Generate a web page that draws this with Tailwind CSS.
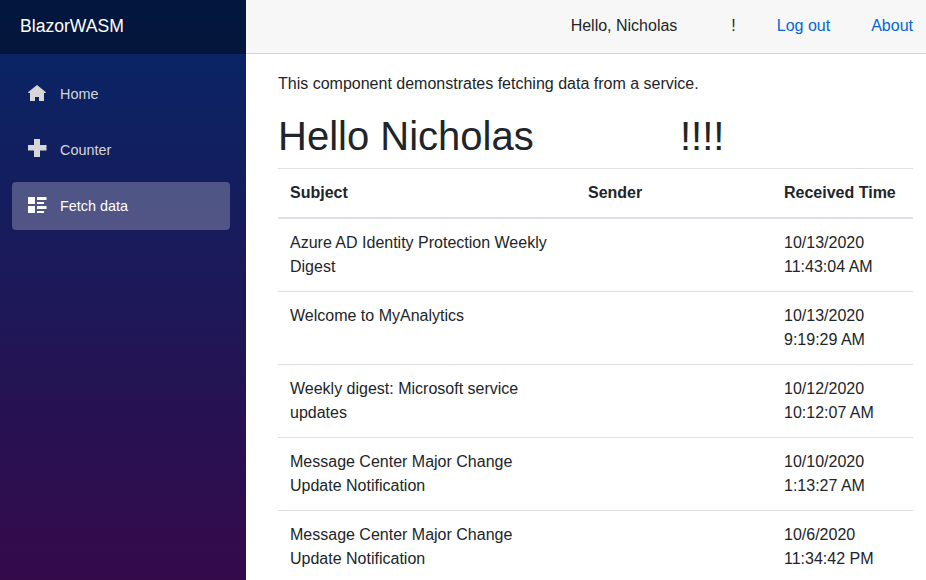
<!DOCTYPE html>
<html lang="en">
<head>
<meta charset="utf-8">
<title>BlazorWASM</title>
<script src="https://cdn.jsdelivr.net/npm/@tailwindcss/browser@4"></script>
</head>
<body class="flex h-[580px] overflow-hidden bg-white font-['Liberation_Sans',Arial,sans-serif] text-base text-[#212529]">
<aside class="h-full w-[246px] shrink-0 bg-[linear-gradient(180deg,rgb(5,39,103)_0px,#3a0647_650px)]">
  <div class="flex h-[54px] items-center bg-black/40 pl-5 pb-px text-[17.6px] text-white">BlazorWASM</div>
  <nav class="flex flex-col gap-2 pl-3 pr-4 pt-4 text-[14.4px] text-[#d7d7d7]">
    <a class="flex h-12 items-center rounded pl-4">
      <svg class="mr-3 h-5 w-5 shrink-0" viewBox="0 0 20 20" fill="currentColor"><path d="M9 1 .3 8v1H2v8h5v-4h4v4h5V9h1.700V8z"/></svg><span class="pt-0.5">Home</span>
    </a>
    <a class="flex h-12 items-center rounded pl-4">
      <svg class="mr-3 h-5 w-5 shrink-0 -translate-y-px" viewBox="0 0 20 20" fill="currentColor"><path d="M6 0h6v6h6.500v5.500H12V18H6v-6.500H0V6h6z"/></svg><span class="pt-0.5">Counter</span>
    </a>
    <a class="flex h-12 items-center rounded bg-white/25 pl-4 text-white">
      <svg class="mr-3 h-5 w-5 shrink-0 -translate-y-px" viewBox="0 0 20 20" fill="currentColor"><path d="M0 2h7v7H0zM0 11h7v7H0zM9 2h9.500v3H9zM9 7h7v2H9zM9 11h9.500v3H9zM9 16h7v2H9z"/></svg><span class="pt-0.5">Fetch data</span>
    </a>
  </nav>
</aside>
<main class="min-w-0 flex-1">
  <header class="flex h-[54px] items-center justify-end border-b border-[#d6d5d5] bg-[#f7f7f7] pr-[13px] pb-0.5">
    <span class="mr-[54px]">Hello, Nicholas</span>
    <span class="mr-[41px]">!</span>
    <a class="mr-[41px] text-[#0366d6]">Log out</a>
    <a class="text-[#0366d6]">About</a>
  </header>
  <section class="pt-[18px] pl-8 pr-[13px]">
    <p class="leading-6">This component demonstrates fetching data from a service.</p>
    <h1 class="mt-4 mb-2 flex h-[46px] items-center pt-0.5 text-[40px] leading-[46px]"><span class="w-[402px]">Hello Nicholas</span><span>!!!!</span></h1>
    <table class="mt-[10px] w-[635px] table-fixed border-separate border-spacing-0 text-left leading-6">
      <colgroup><col class="w-[297px]"><col class="w-[197px]"><col class="w-[141px]"></colgroup>
      <thead>
        <tr class="h-[51px] [&>th]:border-t [&>th]:border-b-2 [&>th]:border-[#dee2e6] [&>th]:px-3 [&>th]:font-bold">
          <th>Subject</th><th class="indent-px">Sender</th><th class="whitespace-nowrap">Received Time</th>
        </tr>
      </thead>
      <tbody class="[&_td]:h-[73px] [&_td]:border-b [&_td]:border-[#dee2e6] [&_td]:px-3 [&_td]:align-middle">
        <tr><td>Azure AD Identity Protection Weekly Digest</td><td></td><td>10/13/2020<br>11:43:04 AM</td></tr>
        <tr><td class="pb-6">Welcome to MyAnalytics</td><td></td><td>10/13/2020<br>9:19:29 AM</td></tr>
        <tr><td>Weekly digest: Microsoft service updates</td><td></td><td>10/12/2020<br>10:12:07 AM</td></tr>
        <tr><td>Message Center Major Change Update Notification</td><td></td><td>10/10/2020<br>1:13:27 AM</td></tr>
        <tr><td>Message Center Major Change Update Notification</td><td></td><td>10/6/2020<br>11:34:42 PM</td></tr>
      </tbody>
    </table>
  </section>
</main>
</body>
</html>
